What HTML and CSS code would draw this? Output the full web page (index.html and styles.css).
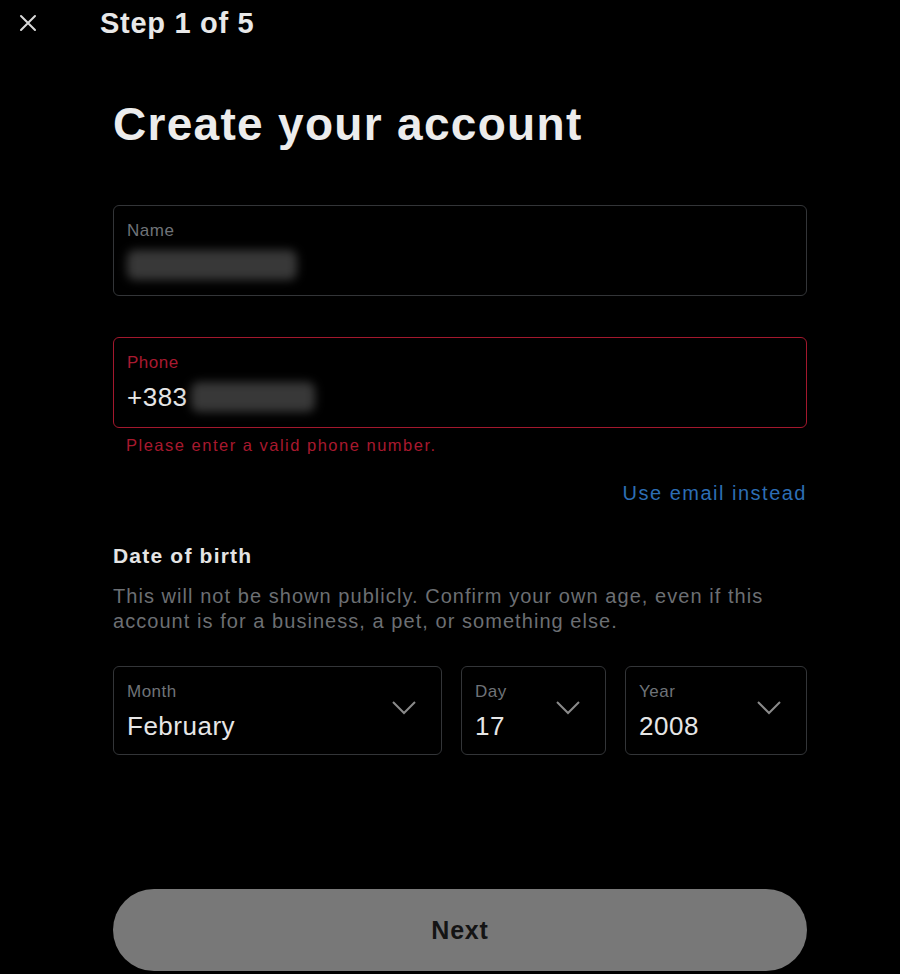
FILE: index.html
```html
<!DOCTYPE html>
<html lang="en">
<head>
  <meta charset="UTF-8">
  <meta name="viewport" content="width=device-width, initial-scale=1.0">
  <title>Create your account</title>
  <link rel="stylesheet" href="styles.css">
</head>
<body>
  <div class="topbar">
    <button class="close" aria-label="Close">
      <svg width="20" height="20" viewBox="0 0 20 20"><path d="M3 3 L17 17 M17 3 L3 17" stroke="#d9d9d9" stroke-width="2" stroke-linecap="round"/></svg>
    </button>
    <div class="step">Step 1 of 5</div>
  </div>

  <div class="container">
    <h1>Create your account</h1>

    <div class="field">
      <div class="label">Name</div>
      <div class="value"><span class="blur blur-name"></span></div>
    </div>

    <div class="field error">
      <div class="label">Phone</div>
      <div class="value">+383<span class="blur blur-phone"></span></div>
    </div>
    <div class="error-text">Please enter a valid phone number.</div>

    <div class="switch"><a href="#">Use email instead</a></div>

    <h3>Date of birth</h3>
    <p class="hint">This will not be shown publicly. Confirm your own age, even if this account is for a business, a pet, or something else.</p>

    <div class="dob">
      <div class="field select month">
        <div class="label">Month</div>
        <div class="value">February</div>
        <svg class="chev" width="26" height="15" viewBox="0 0 26 15"><path d="M2 2 L13 13 L24 2" fill="none" stroke="#8a8a8a" stroke-width="2"/></svg>
      </div>
      <div class="field select day">
        <div class="label">Day</div>
        <div class="value">17</div>
        <svg class="chev" width="26" height="15" viewBox="0 0 26 15"><path d="M2 2 L13 13 L24 2" fill="none" stroke="#8a8a8a" stroke-width="2"/></svg>
      </div>
      <div class="field select year">
        <div class="label">Year</div>
        <div class="value">2008</div>
        <svg class="chev" width="26" height="15" viewBox="0 0 26 15"><path d="M2 2 L13 13 L24 2" fill="none" stroke="#8a8a8a" stroke-width="2"/></svg>
      </div>
    </div>

    <button class="next">Next</button>
  </div>
</body>
</html>
```

FILE: styles.css
```css
* {
  box-sizing: border-box;
  margin: 0;
  padding: 0;
  font-family: 'Liberation Sans', Arial, sans-serif;
}
body {
  background: #000;
  color: #e7e7e7;
  width: 900px;
  height: 974px;
  overflow: hidden;
}
.topbar {
  display: flex;
  align-items: center;
  height: 46px;
  padding-left: 18px;
}
.close {
  background: none;
  border: none;
  width: 20px;
  height: 20px;
  display: flex;
  margin-right: 62px;
}
.step {
  font-size: 29px;
  font-weight: 700;
  letter-spacing: 0.7px;
  color: #e8e8e8;
}
.container {
  width: 694px;
  margin-left: 113px;
}
h1 {
  font-size: 46px;
  font-weight: 700;
  letter-spacing: 1.3px;
  line-height: 56px;
  margin-top: 50px;
  color: #ececec;
}
.field {
  position: relative;
  height: 91px;
  border: 1.5px solid #333538;
  border-radius: 6px;
  padding: 15px 13px 0;
}
.field:first-of-type {
  margin-top: 53px;
}
.field + .field {
  margin-top: 41px;
}
.label {
  font-size: 17px;
  letter-spacing: 0.5px;
  line-height: 20px;
  color: #6f7378;
}
.value {
  display: flex;
  align-items: center;
  font-size: 26px;
  letter-spacing: 0.5px;
  line-height: 30px;
  margin-top: 9px;
  color: #e6e6e6;
}
.blur {
  display: inline-block;
  height: 30px;
  background: #383838;
  border-radius: 8px;
  filter: blur(5px);
}
.blur-name {
  width: 170px;
}
.blur-phone {
  width: 124px;
  margin-left: 3px;
}
.field.error {
  border-color: #a3182d;
}
.field.error .label {
  color: #a91a30;
}
.error-text {
  font-size: 16.5px;
  letter-spacing: 1.5px;
  line-height: 20px;
  color: #a8192e;
  padding-left: 13px;
  margin-top: 7px;
}
.switch {
  text-align: right;
  margin-top: 26px;
  font-size: 20px;
  letter-spacing: 1.5px;
  line-height: 24px;
}
.switch a {
  color: #2d6eb5;
  text-decoration: none;
}
h3 {
  font-size: 21px;
  font-weight: 700;
  letter-spacing: 1.2px;
  line-height: 26px;
  margin-top: 38px;
  color: #e4e4e4;
}
.hint {
  font-size: 20px;
  letter-spacing: 1.05px;
  line-height: 25px;
  color: #6c6f73;
  margin-top: 15px;
  padding-right: 30px;
}
.dob {
  display: flex;
  gap: 19px;
  margin-top: 32px;
}
.field.select {
  height: 89px;
  margin-top: 0;
}
.month {
  width: 329px;
}
.day {
  width: 145px;
}
.year {
  flex: 1;
}
.chev {
  position: absolute;
  right: 24px;
  top: 33px;
}
.next {
  display: block;
  width: 100%;
  height: 82px;
  margin-top: 134px;
  border: none;
  border-radius: 41px;
  background: #787878;
  color: #141414;
  font-size: 25px;
  font-weight: 700;
  letter-spacing: 0.8px;
}
```
